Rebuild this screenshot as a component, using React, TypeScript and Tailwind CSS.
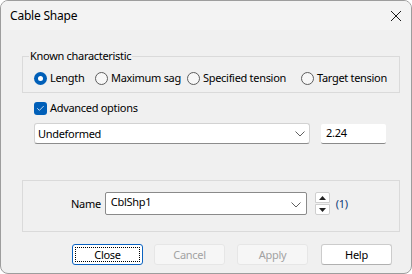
import { Check } from "lucide-react";

const font = { fontFamily: '"Noto Sans", "Liberation Sans", sans-serif' };

function Radio({ label, checked, width }: { label: string; checked?: boolean; width: string }) {
  return (
    <div className={`flex items-center gap-[3px] whitespace-nowrap ${width}`}>
      {checked ? (
        <span className="flex h-[13px] w-[13px] shrink-0 items-center justify-center rounded-full bg-[#005fb8]">
          <span className="h-[5px] w-[5px] rounded-full bg-white" />
        </span>
      ) : (
        <span className="h-[13px] w-[13px] shrink-0 rounded-full border border-[#5d5d5d] bg-[#f7f7f7]" />
      )}
      <span>{label}</span>
    </div>
  );
}

function Chevron() {
  return (
    <svg width="10" height="6" viewBox="0 0 10 6" className="text-[#606060]">
      <path d="M0.5 0.5 L5 5 L9.5 0.5" fill="none" stroke="currentColor" strokeWidth="1" />
    </svg>
  );
}

export default function App() {
  return (
    <div
      className="flex h-[274px] w-[412px] flex-col overflow-hidden whitespace-nowrap rounded-[8px] border border-[#9d9d9d] bg-[#f0f0f0] text-[11px] leading-[16px] tracking-[-0.3px] text-black"
      style={font}
    >
      <div className="flex h-[29px] shrink-0 items-center justify-between bg-[#f3f3f3] pl-[9px] pr-[9px]">
        <span className="pt-[1px] text-[12px] tracking-[-0.2px]">Cable Shape</span>
        <svg width="12" height="12" viewBox="0 0 12 12" className="mt-[1px]">
          <path d="M1 1 L11 11 M11 1 L1 11" stroke="#1a1a1a" strokeWidth="1" />
        </svg>
      </div>

      <div className="flex flex-1 flex-col pl-[21px] pr-[11px]">
        <div className="relative mt-[26px] h-[37px] border border-[#dadada]">
          <span className="absolute -top-[9px] left-[6px] bg-[#f0f0f0] px-[1px]">Known characteristic</span>
          <div className="flex pl-[11px] pt-[13px]">
            <Radio label="Length" checked width="w-[61px]" />
            <Radio label="Maximum sag" width="w-[92px]" />
            <Radio label="Specified tension" width="w-[114px]" />
            <Radio label="Target tension" width="w-[90px]" />
          </div>
        </div>

        <div className="ml-[12px] mt-[7px] flex items-center gap-[3px]">
          <span className="flex h-[13px] w-[13px] items-center justify-center rounded-[3px] bg-[#005fb8]">
            <Check className="h-[9px] w-[9px] text-white" strokeWidth={2} />
          </span>
          <span>Advanced options</span>
        </div>

        <div className="ml-[12px] mt-[7px] flex items-center">
          <div className="flex h-[21px] w-[276px] items-center justify-between rounded-[3px] border border-[#d2d2d2] border-b-[#8c8c8c] bg-white pl-[3px] pr-[4px]">
            <span>Undeformed</span>
            <Chevron />
          </div>
          <div className="ml-[11px] flex h-[20px] w-[65px] items-center rounded-[2px] border-b border-[#8a8a8a] bg-white pl-[5px]">
            2.24
          </div>
        </div>

        <div className="mt-[36px] flex h-[52px] items-start border border-[#dadada] pl-[48px] pt-[11px]">
          <div className="flex items-center">
            <span className="mr-[4px]">Name</span>
            <div className="flex h-[23px] w-[202px] items-start justify-between rounded-[2px] border border-[#8a8a8a] bg-white pl-[5px] pr-[5px] pt-[1px]">
              <span>CblShp1</span>
              <span className="mt-[8px]">
                <Chevron />
              </span>
            </div>
            <div className="ml-[8px] flex h-[23px] w-[15px] flex-col">
              <span className="flex h-[11px] items-center justify-center rounded-t-[2px] border border-[#cfcfcf] bg-white">
                <svg width="7" height="4" viewBox="0 0 7 4">
                  <path d="M0 4 L3.5 0 L7 4 Z" fill="#222" />
                </svg>
              </span>
              <span className="mt-[1px] flex h-[11px] items-center justify-center rounded-b-[2px] border border-[#cfcfcf] bg-white">
                <svg width="7" height="4" viewBox="0 0 7 4">
                  <path d="M0 0 L3.5 4 L7 0 Z" fill="#222" />
                </svg>
              </span>
            </div>
            <span className="ml-[6px] text-[#0e3a78]">(1)</span>
          </div>
        </div>

        <div className="ml-[50px] mt-[12px] flex">
          <button className="flex h-[21px] w-[71px] items-center justify-center rounded-[3px] border border-[#0a62c0] bg-white p-[2px]">
            <span className="flex h-full w-full items-center justify-center border border-dotted border-black">Close</span>
          </button>
          <button className="ml-[11px] h-[21px] w-[71px] rounded-[3px] border border-[#e6e6e6] bg-[#f6f6f6] text-[#a2a2a2]">
            Cancel
          </button>
          <button className="ml-[12px] h-[21px] w-[71px] rounded-[3px] border border-[#e6e6e6] bg-[#f6f6f6] text-[#a2a2a2]">
            Apply
          </button>
          <button className="ml-[13px] h-[21px] w-[71px] rounded-[3px] border border-[#cccccc] border-b-[#b0b0b0] bg-white">
            Help
          </button>
        </div>
      </div>
    </div>
  );
}
